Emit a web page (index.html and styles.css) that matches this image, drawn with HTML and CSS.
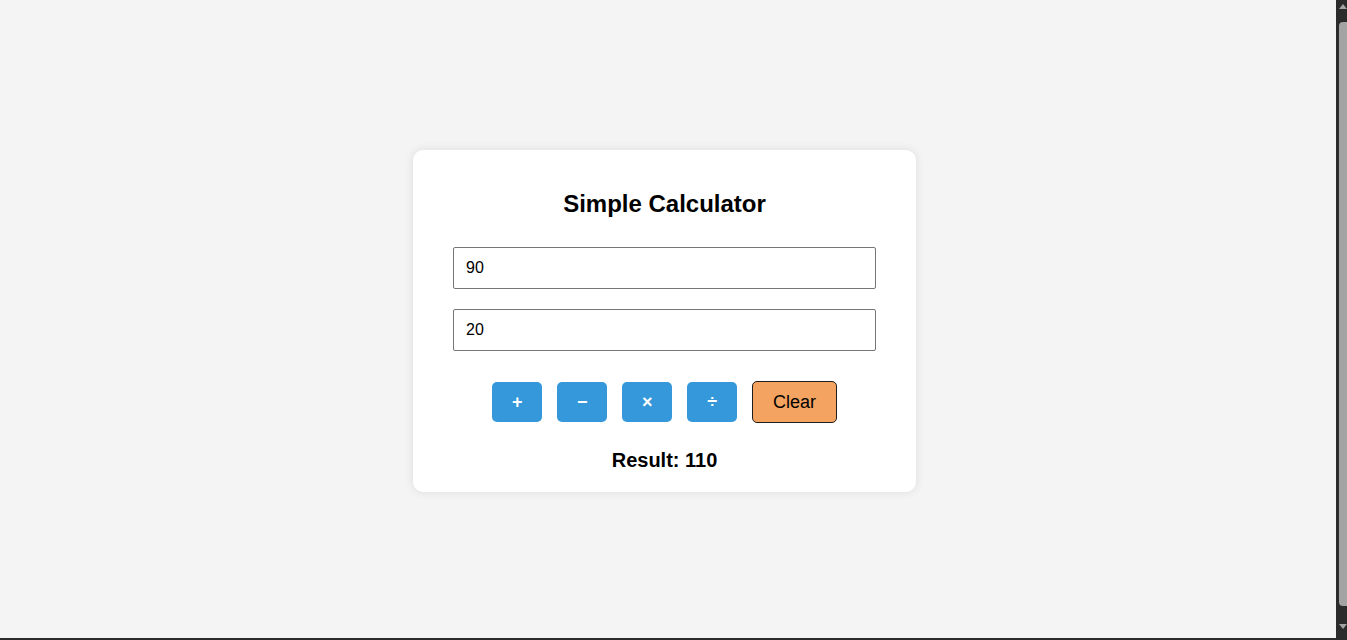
FILE: index.html
```html
<!DOCTYPE html>
<html lang="en">
<head>
<meta charset="utf-8">
<title>Simple Calculator</title>
<link rel="stylesheet" href="styles.css">
</head>
<body>
<div class="card">
  <h2 class="title">Simple Calculator</h2>
  <input class="num" type="number" value="90">
  <input class="num num-last" type="number" value="20">
  <div class="ops">
    <button class="op">+</button>
    <button class="op">&minus;</button>
    <button class="op">&times;</button>
    <button class="op">&divide;</button>
    <button class="clear">Clear</button>
  </div>
  <div class="result">Result: 110</div>
</div>
<div class="vscroll" aria-hidden="true">
  <span class="arrow-up"></span>
  <span class="thumb"></span>
  <span class="arrow-down"></span>
</div>
<div class="hedge" aria-hidden="true"></div>
</body>
</html>
```

FILE: styles.css
```css
html {
  overflow: hidden;
}
body {
  box-sizing: border-box;
  margin: 0;
  padding: 2px 18px 0 0;
  min-height: 100vh;
  background: #f4f4f4;
  color: #000;
  font-family: "Liberation Sans", Arial, sans-serif;
  font-size: 16px;
  display: flex;
  justify-content: center;
  align-items: center;
}
.card {
  box-sizing: border-box;
  width: 503px;
  height: 342px;
  padding: 40px 40px 20px;
  background: #fff;
  border-radius: 10px;
  box-shadow: 0 0 10px rgba(0, 0, 0, 0.1);
  display: flex;
  flex-direction: column;
}
.title {
  margin: 0 0 29px;
  font-size: 24px;
  font-weight: bold;
  text-align: center;
  line-height: 27.6px;
}
.num {
  display: block;
  box-sizing: border-box;
  width: 100%;
  height: 42px;
  margin: 0 0 20px;
  padding: 0 12px;
  border: 1px solid #767676;
  border-radius: 2px;
  font-family: "Liberation Sans", Arial, sans-serif;
  font-size: 16px;
  color: #000;
  background: #fff;
  outline: none;
  -moz-appearance: textfield;
}
.num::-webkit-outer-spin-button,
.num::-webkit-inner-spin-button {
  -webkit-appearance: none;
  margin: 0;
}
.num-last {
  margin-bottom: 30px;
}
.ops {
  display: flex;
  justify-content: center;
  align-items: center;
  gap: 14.5px;
  height: 43px;
}
.op {
  box-sizing: border-box;
  width: 50.5px;
  height: 40.7px;
  padding: 0;
  border: none;
  border-radius: 5px;
  background: #3498db;
  color: #fff;
  font-family: "Liberation Sans", Arial, sans-serif;
  font-size: 18px;
  font-weight: bold;
}
.clear {
  box-sizing: border-box;
  height: 42.7px;
  padding: 0 20px;
  border: 1px solid #1e1e1e;
  border-radius: 5px;
  background: #f4a460;
  color: #000;
  font-family: "Liberation Sans", Arial, sans-serif;
  font-size: 18px;
}
.result {
  margin-top: 25px;
  text-align: center;
  font-size: 20px;
  font-weight: bold;
  line-height: 23px;
}

/* browser chrome visible in the capture: dark vertical scrollbar, bottom edge */
.vscroll {
  position: fixed;
  top: 0;
  right: 0;
  width: 11px;
  height: 638px;
  background: #2b2b2b;
}
.arrow-up,
.arrow-down {
  position: absolute;
  left: 3px;
  width: 0;
  height: 0;
  border-left: 4px solid transparent;
  border-right: 4px solid transparent;
}
.arrow-up {
  top: 4px;
  border-bottom: 5px solid #a3a3a3;
}
.arrow-down {
  top: 624px;
  border-top: 5px solid #a3a3a3;
}
.thumb {
  position: absolute;
  top: 22px;
  left: 3px;
  right: 0;
  height: 584px;
  background: #a3a3a3;
  border-radius: 4px 0 0 4px;
}
.hedge {
  position: fixed;
  left: 0;
  right: 0;
  bottom: 0;
  height: 2px;
  background: #2b2b2b;
}
```
